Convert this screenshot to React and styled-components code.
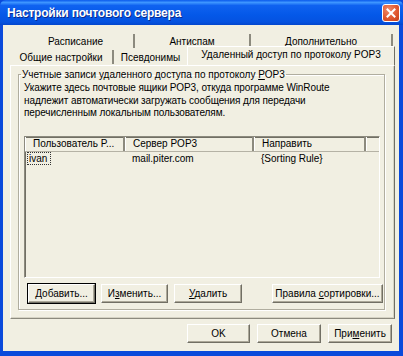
import React from 'react';
import styled, { createGlobalStyle } from 'styled-components';

const dialogBg = '#F1EFE2';
const shadow = '#8C8A7E';
const darkShadow = '#716F64';

const GlobalStyle = createGlobalStyle`
  html, body {
    margin: 0;
    padding: 0;
    background: #fff;
  }
  body {
    font-family: "Liberation Sans", Arial, sans-serif;
    font-size: 10px;
    color: #000;
  }
`;

const Window = styled.div`
  width: 403px;
  height: 356px;
  display: flex;
  flex-direction: column;
  background: #0A4ADB;
  box-sizing: border-box;
  padding: 0 4px 5px 3px;
`;

const TitleBar = styled.div`
  height: 25px;
  margin: 0 -4px 0 -3px;
  display: flex;
  align-items: center;
  justify-content: space-between;
  padding: 0 3px 0 7px;
  background: linear-gradient(
    #0A5AEC 0%,
    #3D95FF 10%,
    #0F62F0 22%,
    #0458E8 60%,
    #0552E0 88%,
    #0346CC 100%
  );
  border-radius: 6px 6px 0 0;
`;

const Title = styled.span`
  color: #fff;
  font-weight: bold;
  font-size: 12px;
  letter-spacing: -0.2px;
  text-shadow: 1px 1px 0 #0B2A8C;
`;

const CloseButton = styled.div`
  width: 16px;
  height: 16px;
  border: 1px solid #fff;
  border-radius: 3px;
  background: radial-gradient(circle at 35% 30%, #F08B6B 0%, #E0582F 55%, #C63E17 100%);
  display: flex;
  align-items: center;
  justify-content: center;
`;

const Body = styled.div`
  flex: 1;
  background: ${dialogBg};
  display: flex;
  flex-direction: column;
  padding: 8px 4px 0 7px;
`;

const TabRow = styled.div`
  display: flex;
  height: 16px;
  padding-left: ${p => p.$indent || 0}px;
`;

const Tab = styled.div`
  width: ${p => p.$w}px;
  box-sizing: border-box;
  display: flex;
  align-items: center;
  justify-content: center;
  border-right: ${p => (p.$sep ? `2px solid ${shadow}` : 'none')};
  height: 14px;
  margin-top: 1px;
  white-space: nowrap;
`;

const ActiveTab = styled.div`
  width: ${p => p.$w}px;
  box-sizing: border-box;
  height: 19px;
  margin-top: -3px;
  margin-bottom: -1px;
  display: flex;
  align-items: center;
  justify-content: center;
  border-right: 1px solid ${darkShadow};
  border-left: 1px solid #fff;
  border-top: 1px solid #fff;
  background: ${dialogBg};
  position: relative;
  z-index: 1;
  white-space: nowrap;
  padding-bottom: 3px;
`;

const Panel = styled.div`
  height: 254px;
  box-sizing: border-box;
  border-top: 1px solid #fff;
  border-left: 1px solid #fff;
  border-right: 1px solid ${darkShadow};
  border-bottom: 1px solid ${shadow};
  box-shadow: inset -1px -1px 0 #D6D3C4;
  padding: 3px 9px 8px 7px;
`;

const GroupBox = styled.fieldset`
  margin: 0;
  height: 100%;
  box-sizing: border-box;
  border: 1px solid #B0AD9F;
  box-shadow: 1px 1px 0 #fff, inset 1px 1px 0 #fff;
  padding: 4px 4px 6px 5px;
  display: flex;
  flex-direction: column;
`;

const Legend = styled.legend`
  padding: 0 1px;
  margin-left: -3px;
  font-size: 10px;
`;

const Hint = styled.p`
  margin: -2px 0 16px 0;
  line-height: 12.5px;
  letter-spacing: -0.1px;
`;

const ListView = styled.div`
  flex: 1;
  border-top: 1px solid ${shadow};
  border-left: 1px solid ${shadow};
  border-right: 1px solid #fff;
  border-bottom: 1px solid #fff;
  box-shadow: inset 1px 1px 0 ${darkShadow};
  display: flex;
  flex-direction: column;
`;

const grid = '100px 129px 112px 1fr';

const HeaderRow = styled.div`
  display: grid;
  grid-template-columns: ${grid};
  height: 14px;
  border-bottom: 1px solid #B5B2A5;
`;

const HeaderCell = styled.div`
  padding-left: 7px;
  display: flex;
  align-items: center;
  border-right: 2px solid ${shadow};
  border-left: 1px solid #fff;
  white-space: nowrap;
  overflow: hidden;
  &:last-child {
    border-right: none;
  }
`;

const DataRow = styled.div`
  display: grid;
  grid-template-columns: ${grid};
  height: 13px;
  align-items: center;
`;

const Cell = styled.div`
  padding-left: ${p => p.$pad ?? 7}px;
  white-space: nowrap;
`;

const Focused = styled.span`
  display: inline-block;
  border: 1px dotted #333;
  padding: 0 3px 0 1px;
  line-height: 11px;
`;

const ButtonRow = styled.div`
  display: flex;
  gap: 6px;
  margin: 6px -3px 0 0;
  padding-left: 4px;
`;

const Button = styled.div`
  width: ${p => p.$w}px;
  height: 19px;
  box-sizing: border-box;
  display: flex;
  align-items: center;
  justify-content: center;
  border-top: 1px solid #fff;
  border-left: 1px solid #fff;
  border-right: 1px solid ${darkShadow};
  border-bottom: 1px solid ${darkShadow};
  box-shadow: inset -1px -1px 0 #ACA899;
  outline: ${p => (p.$default ? '1px solid #000' : 'none')};
  background: ${dialogBg};
  white-space: nowrap;
  margin-left: ${p => (p.$push ? 'auto' : '0')};
`;

const Footer = styled.div`
  display: flex;
  justify-content: flex-end;
  gap: 7px;
  padding: 5px 3px 0 0;
`;

const U = styled.span`
  text-decoration: underline;
`;

export default function App() {
  return (
    <>
      <GlobalStyle />
      <Window>
        <TitleBar>
          <Title>Настройки почтового сервера</Title>
          <CloseButton>
            <svg width="10" height="10" viewBox="0 0 10 10">
              <path d="M1.5 1.5 L8.5 8.5 M8.5 1.5 L1.5 8.5" stroke="#fff" strokeWidth="2" strokeLinecap="square" />
            </svg>
          </CloseButton>
        </TitleBar>
        <Body>
          <TabRow $indent={8}>
            <Tab $w={117} $sep>Расписание</Tab>
            <Tab $w={116} $sep>Антиспам</Tab>
            <Tab $w={142} $sep>Дополнительно</Tab>
          </TabRow>
          <TabRow>
            <Tab $w={104} $sep>Общие настройки</Tab>
            <Tab $w={73}>Псевдонимы</Tab>
            <ActiveTab $w={208}>Удаленный доступ по протоколу POP3</ActiveTab>
          </TabRow>
          <Panel>
            <GroupBox>
              <Legend>
                Учетные записи удаленного доступа по протоколу <U>P</U>OP3
              </Legend>
              <Hint>
                Укажите здесь почтовые ящики POP3, откуда программе WinRoute
                <br />
                надлежит автоматически загружать сообщения для передачи
                <br />
                перечисленным локальным пользователям.
              </Hint>
              <ListView>
                <HeaderRow>
                  <HeaderCell>Пользователь P...</HeaderCell>
                  <HeaderCell>Сервер POP3</HeaderCell>
                  <HeaderCell>Направить</HeaderCell>
                  <HeaderCell />
                </HeaderRow>
                <DataRow>
                  <Cell $pad={2}>
                    <Focused>ivan</Focused>
                  </Cell>
                  <Cell>mail.piter.com</Cell>
                  <Cell>{'{Sorting Rule}'}</Cell>
                  <Cell />
                </DataRow>
              </ListView>
              <ButtonRow>
                <Button $w={67} $default>
                  <span><U>Д</U>обавить...</span>
                </Button>
                <Button $w={67}>
                  <span>И<U>з</U>менить...</span>
                </Button>
                <Button $w={68}>
                  <span><U>У</U>далить</span>
                </Button>
                <Button $w={111} $push>
                  <span>Правила <U>с</U>ортировки...</span>
                </Button>
              </ButtonRow>
            </GroupBox>
          </Panel>
          <Footer>
            <Button $w={63}>OK</Button>
            <Button $w={64}>Отмена</Button>
            <Button $w={64}>
              <span>При<U>м</U>енить</span>
            </Button>
          </Footer>
        </Body>
      </Window>
    </>
  );
}
